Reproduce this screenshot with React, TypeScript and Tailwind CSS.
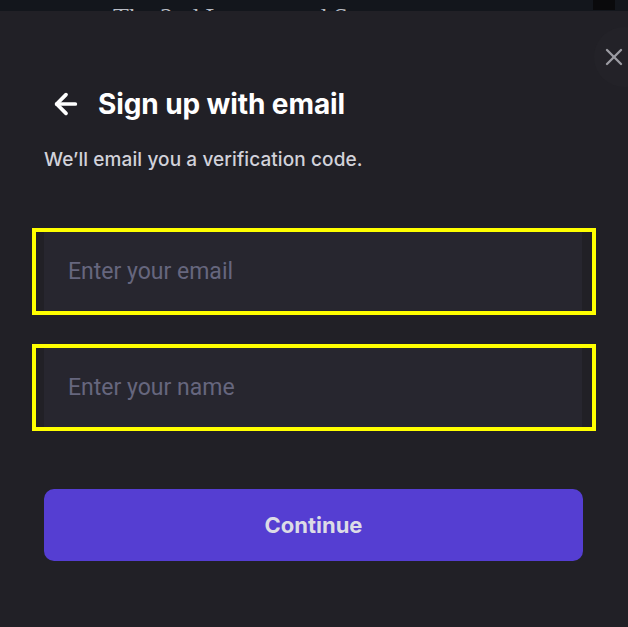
import { ArrowLeft, X } from "lucide-react";

function Field({ placeholder }: { placeholder: string }) {
  return (
    <div className="-ml-3 w-[564px] border-4 border-[#ffff00] pl-2 pr-[10px]">
      <input
        type="text"
        placeholder={placeholder}
        className="h-[79px] w-full bg-[#27262f] pl-6 text-[23px] text-white outline-none placeholder:text-[#66667e]"
        style={{ fontFamily: "Roboto, 'Liberation Sans', sans-serif" }}
      />
    </div>
  );
}

export default function App() {
  return (
    <div
      className="flex h-[627px] w-[628px] flex-col overflow-hidden bg-[#212026]"
      style={{ fontFamily: "Inter, 'Liberation Sans', sans-serif" }}
    >
      {/* page behind the dialog, mostly hidden */}
      <div className="relative h-[11px] shrink-0 overflow-hidden bg-[#13161c]">
        <p
          className="absolute left-[113px] top-[5px] whitespace-nowrap text-[26px] leading-none text-[#b8bcc4]"
          style={{ fontFamily: "'Liberation Serif', serif" }}
        >
          The 2nd Largest and Strongest
        </p>
        <div className="absolute left-[593px] top-0 h-[10px] w-[22px] bg-[#0a0a0c]" />
      </div>

      <div className="relative flex-1 px-[44px]">
        <button className="absolute right-[-26px] top-[16px] flex h-[60px] w-[60px] items-center justify-center rounded-full bg-[#232228] text-[#9c9ca3]">
          <X className="mr-[21px] h-[28px] w-[28px]" strokeWidth={2} />
        </button>

        <div className="mt-[77px] flex items-center gap-[16px] pl-[6px]">
          <ArrowLeft className="h-[32px] w-[32px] text-white" strokeWidth={2.8} />
          <h2 className="text-[28px] font-bold leading-none tracking-[-0.1px] text-white">
            Sign up with email
          </h2>
        </div>
        <p className="mt-[30px] text-[19px] font-medium leading-none tracking-[0.1px] text-[#d2d2da]">
          We’ll email you a verification code.
        </p>

        <div className="mt-[59px] flex flex-col gap-[29px]">
          <Field placeholder="Enter your email" />
          <Field placeholder="Enter your name" />
        </div>

        <button className="mt-[58px] flex h-[72px] w-[539px] items-center justify-center rounded-[10px] bg-[#553ed2] text-[22px] font-bold text-[#dcdce6]">
          Continue
        </button>
      </div>
    </div>
  );
}
